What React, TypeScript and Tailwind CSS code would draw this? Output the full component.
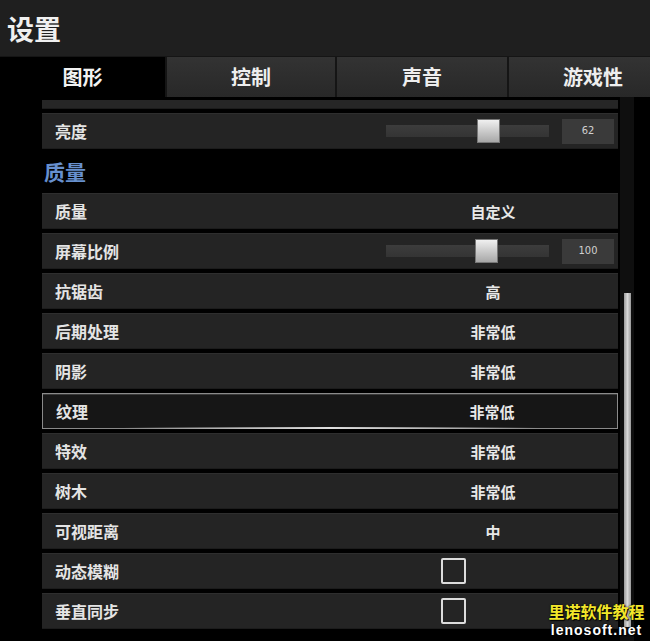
import React from "react";

const FONT = { fontFamily: '"Noto Sans CJK SC", "Noto Sans", sans-serif' };

function Row({ label, children, active }: { label: string; children?: React.ReactNode; active?: boolean }) {
  return (
    <div
      className={
        active
          ? "relative h-[36px] flex items-center bg-[#161616] border border-[#8a8a8a] shadow-[inset_0_1px_0_#3a3a3a]"
          : "h-[36px] flex items-center bg-[#242424] border-t border-[#2e2e2e] border-b border-b-[#1c1c1c]"
      }
    >
      <div className="flex-1 pl-[13px] text-[16px] font-bold text-[#e4e4e4] leading-none">{label}</div>
      <div className="w-[228px] mr-[4px] flex items-center">{children}</div>
      {active && (
        <div className="absolute left-[80px] right-[80px] bottom-[-1px] h-[2px] bg-gradient-to-r from-transparent via-[#e0e0e0] to-transparent" />
      )}
    </div>
  );
}

function Value({ text }: { text: string }) {
  return <div className="w-[214px] text-center text-[15px] font-bold text-[#e8e8e8] leading-none">{text}</div>;
}

function Slider({ pos, value }: { pos: number; value: string }) {
  return (
    <div className="flex items-center w-full">
      <div className="relative w-[163px] h-[12px] bg-gradient-to-b from-[#3c3c3c] to-[#343434]">
        <div
          className="absolute top-[-6px] w-[23px] h-[24px] bg-gradient-to-b from-[#f0f0f0] to-[#a8a8a8] border border-[#777]"
          style={{ left: pos }}
        />
      </div>
      <div className="ml-[13px] w-[52px] h-[25px] bg-[#3a3a3a] flex items-center justify-center text-[11px] text-[#d0d0d0] font-['Liberation_Sans_Narrow','DejaVu_Sans_Condensed',sans-serif]">
        {value}
      </div>
    </div>
  );
}

function Check() {
  return (
    <div className="pl-[55px]">
      <div className="w-[25px] h-[26px] border-2 border-[#dcdcdc] rounded-[2px]" />
    </div>
  );
}

const tabCls =
  "shrink-0 bg-gradient-to-b from-[#333] to-[#282828] border-l-2 border-[#151515] flex items-center justify-center text-[20px] font-bold text-[#eeeeee]";

export default function App() {
  return (
    <div className="relative w-[650px] h-[641px] bg-black overflow-hidden" style={FONT}>
      <div className="h-[57px] bg-[#1f1f1f] border-b border-[#151515] flex items-center pl-[7px]">
        <span className="text-[27px] font-bold text-[#f0f0f0] leading-none">设置</span>
      </div>
      <div className="h-[40px] flex overflow-hidden">
        <div className="w-[165px] shrink-0 bg-black flex items-center justify-center text-[20px] font-bold text-[#f2f2f2]">图形</div>
        <div className={`w-[170px] ${tabCls}`}>控制</div>
        <div className={`w-[172px] ${tabCls}`}>声音</div>
        <div className={`w-[170px] ${tabCls}`}>游戏性</div>
      </div>
      <div className="flex">
        <div className="ml-[42px] w-[576px] flex flex-col">
          <div className="mt-[3px] h-[9px] bg-[#262626] border-b border-[#1c1c1c]" />
          <div className="mt-[4px]">
            <Row label="亮度">
              <Slider pos={91} value="62" />
            </Row>
          </div>
          <div className="h-[44px] flex items-center pl-[2px] text-[21px] font-bold text-[#6790cf] leading-none">质量</div>
          <div className="flex flex-col gap-[4px]">
            <Row label="质量"><Value text="自定义" /></Row>
            <Row label="屏幕比例"><Slider pos={89} value="100" /></Row>
            <Row label="抗锯齿"><Value text="高" /></Row>
            <Row label="后期处理"><Value text="非常低" /></Row>
            <Row label="阴影"><Value text="非常低" /></Row>
            <Row label="纹理" active><Value text="非常低" /></Row>
            <Row label="特效"><Value text="非常低" /></Row>
            <Row label="树木"><Value text="非常低" /></Row>
            <Row label="可视距离"><Value text="中" /></Row>
            <Row label="动态模糊"><Check /></Row>
            <Row label="垂直同步"><Check /></Row>
          </div>
        </div>
        <div className="ml-[2px] w-[14px] h-[544px] bg-[#0f0f0f] flex justify-center">
          <div className="mt-[196px] w-[7px] h-[334px] bg-gradient-to-r from-[#9a9a9a] via-[#d8d8d8] to-[#9a9a9a]" />
        </div>
      </div>
      <div className="absolute left-[547px] top-[603px] w-[99px] flex flex-col items-center leading-none">
        <span className="text-[16px] font-bold text-[#f2e62a] [text-shadow:0_0_2px_#000,1px_1px_1px_#000]">里诺软件教程</span>
        <span className="mt-[4px] text-[14px] font-bold text-white tracking-[1px] font-['Liberation_Sans',sans-serif] [text-shadow:0_0_2px_#000,1px_1px_1px_#000]">lenosoft.net</span>
      </div>
    </div>
  );
}
